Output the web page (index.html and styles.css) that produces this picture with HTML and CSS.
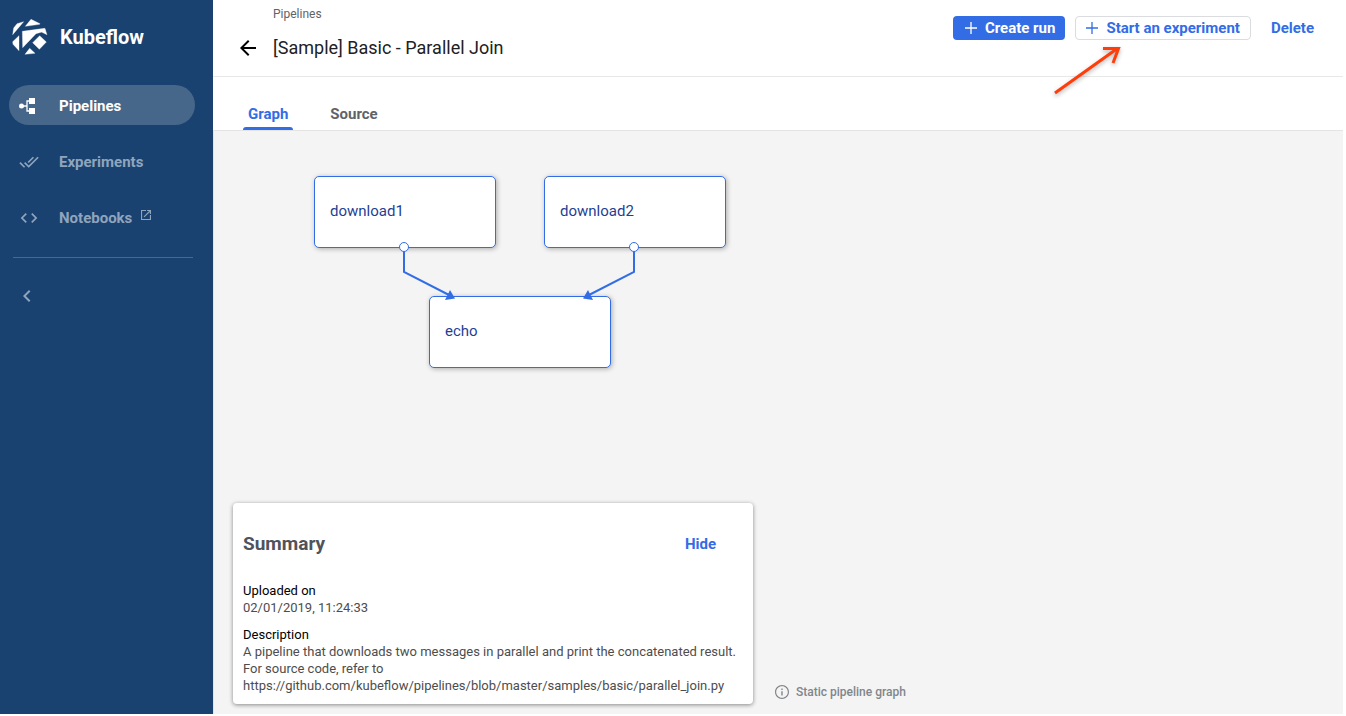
FILE: index.html
```html
<!DOCTYPE html>
<html lang="en">
<head>
<meta charset="utf-8">
<title>Kubeflow Pipelines</title>
<link rel="stylesheet" href="styles.css">
</head>
<body>
<div class="app">
  <aside class="sidebar">
    <a class="brand" href="#">
      <svg class="brand-logo" width="36" height="36" viewBox="35 57 108 108" fill="#fff" stroke="#fff" stroke-width="1" stroke-linejoin="round" aria-hidden="true">
        <path d="M37 104 40 84 50 71 70 65zM75 79 92 58 119 71 118 73zM66 94 133 85 135 92 125 96 107 101 67 143zM134 86 140 104 125 97zM118 107 138 126 117 148 97 128zM37 125 56 107 56 152 38 133zM88 145 104 160 74 163z"/>
      </svg>
      <span>Kubeflow</span>
    </a>
    <nav class="nav">
      <a class="nav-item active" href="#">
        <svg width="20" height="20" viewBox="0 0 20 20" fill="#fff" aria-hidden="true"><circle cx="2.500" cy="10" r="2.500"/><path d="M10 2h6v6h-6zM10 12h6v6h-6z"/><path d="M3 10h5M10 5H8v10h2" fill="none" stroke="#fff" stroke-width="1.300"/></svg>
        <span>Pipelines</span>
      </a>
      <a class="nav-item" href="#">
        <svg width="20" height="20" viewBox="0 0 24 24" fill="currentColor" aria-hidden="true"><path d="M18 7l-1.41-1.41-6.34 6.34 1.41 1.41L18 7zm4.24-1.41L11.66 16.17 7.48 12l-1.41 1.41L11.66 19l12-12-1.42-1.41zM.41 13.41L6 19l1.41-1.41L1.83 12 .41 13.41z"/></svg>
        <span>Experiments</span>
      </a>
      <a class="nav-item" href="#">
        <svg width="20" height="20" viewBox="0 0 24 24" fill="currentColor" aria-hidden="true"><path d="M9.400 16.600L4.800 12l4.600-4.600L8 6l-6 6 6 6 1.400-1.400zm5.200 0l4.600-4.600-4.600-4.600L16 6l6 6-6 6-1.400-1.400z"/></svg>
        <span>Notebooks</span>
        <svg class="external" width="10" height="10" viewBox="3 3 18 18" fill="currentColor" aria-hidden="true"><path d="M19 19H5V5h7V3H3v18h18v-9h-2v7zM14 3v2h3.590l-9.830 9.830 1.410 1.410L19 6.410V10h2V3h-7z"/></svg>
      </a>
    </nav>
    <button class="collapse" type="button" aria-label="Collapse sidebar">
      <svg width="24" height="24" viewBox="0 0 24 24" fill="currentColor" aria-hidden="true"><path d="M15.410 7.410L14 6l-6 6 6 6 1.410-1.410L10.830 12z"/></svg>
    </button>
  </aside>

  <main class="main">
    <header class="header">
      <div class="titles">
        <a class="crumb" href="#">Pipelines</a>
        <div class="title-row">
          <button class="back" type="button" aria-label="Back">
            <svg width="24" height="24" viewBox="0 0 24 24" fill="currentColor" aria-hidden="true"><path d="M20 11H7.830l5.590-5.590L12 4l-8 8 8 8 1.410-1.410L7.830 13H20v-2z"/></svg>
          </button>
          <h1 class="title">[Sample] Basic - Parallel Join</h1>
        </div>
      </div>
      <div class="actions">
        <button class="btn primary" type="button"><svg width="12" height="12" viewBox="0 0 12 12" stroke="currentColor" stroke-width="1.300" aria-hidden="true"><path d="M6 0v12M0 6h12"/></svg>Create run</button>
        <button class="btn outlined" type="button"><svg width="12" height="12" viewBox="0 0 12 12" stroke="currentColor" stroke-width="1.300" aria-hidden="true"><path d="M6 0v12M0 6h12"/></svg>Start an experiment</button>
        <button class="btn" type="button">Delete</button>
        <svg class="pointer" width="76" height="60" viewBox="0 0 76 60" fill="none" stroke="#ff3d0a" stroke-width="3" aria-hidden="true"><path d="M5 53 68 8M53 8.500H68.500L63 23"/></svg>
      </div>
    </header>
    <div class="tabs" role="tablist">
      <button class="tab selected" type="button" role="tab" aria-selected="true">Graph</button>
      <button class="tab" type="button" role="tab" aria-selected="false">Source</button>
    </div>
    <section class="canvas">
      <div class="graph">
        <div class="node node-download1">download1</div>
        <div class="node node-download2">download2</div>
        <div class="node node-echo">echo</div>
        <svg class="edges" width="420" height="200" viewBox="0 0 420 200" aria-hidden="true">
          <g fill="none" stroke="#326de6" stroke-width="2"><path d="M91 75V96L138 120M321 75V96L274 120"/></g>
          <path d="M137 114 142 122.500 132 124zM275 114 270 122.500 280 124z" fill="#326de6"/>
          <g fill="#fff" stroke="#326de6"><circle cx="91" cy="71" r="4.500"/><circle cx="321" cy="71" r="4.500"/></g>
        </svg>
      </div>
      <div class="bottom">
        <article class="summary">
          <div class="summary-head">
            <h2>Summary</h2>
            <button class="btn hide" type="button">Hide</button>
          </div>
          <h3>Uploaded on</h3>
          <p>02/01/2019, 11:24:33</p>
          <h3>Description</h3>
          <p>A pipeline that downloads two messages in parallel and print the concatenated result.<br>For source code, refer to<br>https://github.com/kubeflow/pipelines/blob/master/samples/basic/parallel_join.py</p>
        </article>
        <div class="note">
          <svg width="14" height="14" viewBox="2 2 20 20" fill="currentColor" aria-hidden="true"><path d="M11 17h2v-6h-2v6zm1-15C6.480 2 2 6.480 2 12s4.480 10 10 10 10-4.480 10-10S17.520 2 12 2zm0 18.300c-4.600 0-8.300-3.700-8.300-8.300S7.400 3.700 12 3.700s8.300 3.700 8.300 8.300-3.700 8.300-8.300 8.300zM11 9h2V7h-2v2z"/></svg>
          <span>Static pipeline graph</span>
        </div>
      </div>
    </section>
  </main>
</div>
</body>
</html>
```
FILE: styles.css
```css
* { box-sizing: border-box; }
body {
  margin: 0;
  background: #fff;
  font-family: Roboto, "Liberation Sans", sans-serif;
  font-size: 13px;
  color: #000;
}
button {
  font: inherit;
  border: 0;
  background: none;
  padding: 0;
  color: inherit;
}
a { color: inherit; text-decoration: none; }
svg { display: block; flex: none; }
h1, h2, h3, p { margin: 0; }

.app {
  display: flex;
  min-height: 100vh;
  padding: 0 3px 2px 0;
}

.sidebar {
  flex: none;
  width: 213px;
  background: #1a4270;
  color: #8fa5bd;
}
.brand {
  display: flex;
  align-items: center;
  gap: 12px;
  padding: 19px 12px 30px;
  color: #fff;
  font-size: 20px;
  font-weight: 700;
}
.nav {
  display: flex;
  flex-direction: column;
  gap: 16px;
  margin: 0 20px 0 13px;
  padding-bottom: 20px;
  border-bottom: 1px solid #47698c;
}
.nav-item {
  display: flex;
  align-items: center;
  gap: 20px;
  height: 40px;
  margin: 0 -2px 0 -4px;
  padding: 2px 10px 0;
  border-radius: 20px;
  font-size: 15px;
  font-weight: 700;
}
.nav-item.active { background: #466789; color: #fff; }
.external { margin: 0 0 6px -11px; }
.collapse { margin: 26px 15px; }

.main {
  flex: 1;
  min-width: 0;
  display: flex;
  flex-direction: column;
}
.header {
  display: flex;
  justify-content: space-between;
  align-items: flex-start;
  height: 77px;
  border-bottom: 1px solid #e8e8e8;
}
.titles { padding: 6px 0 0 23px; }
.crumb {
  display: block;
  margin-left: 37px;
  line-height: 16px;
  font-size: 12px;
  color: #5f6368;
}
.title-row {
  display: flex;
  align-items: center;
  gap: 13px;
  margin-top: 14px;
}
.title {
  font-size: 18px;
  line-height: 24px;
  font-weight: 400;
  color: #202124;
}
.actions {
  position: relative;
  display: flex;
  gap: 10px;
  padding: 16px 19px 0 0;
}
.btn {
  display: flex;
  align-items: center;
  gap: 8px;
  height: 24px;
  padding: 0 10px;
  border-radius: 4px;
  color: #326de6;
  font-size: 15px;
  font-weight: 700;
  white-space: nowrap;
}
.primary { padding: 0 10px 0 12px; background: #326de6; color: #fff; }
.outlined { border: 1px solid #dadce0; }
.pointer {
  position: absolute;
  top: 40px;
  right: 217px;
  filter: drop-shadow(0 2px 2px rgba(0, 0, 0, 0.3));
}

.tabs {
  display: flex;
  gap: 32px;
  height: 54px;
  padding-left: 30px;
  border-bottom: 1px solid #e4e4e4;
}
.tab {
  position: relative;
  padding: 20px 5px 0;
  color: #5f6368;
  font-size: 15px;
  font-weight: 700;
}
.tab.selected { color: #326de6; }
.tab.selected::after {
  content: "";
  position: absolute;
  left: 0;
  right: 0;
  bottom: 0;
  height: 3px;
  border-radius: 3px 3px 0 0;
  background: #326de6;
}

.canvas {
  flex: 1;
  display: flex;
  flex-direction: column;
  justify-content: space-between;
  padding: 45px 20px 10px;
  border-left: 1px solid #e4e4e4;
  background: #f4f4f4;
}
.graph {
  position: relative;
  height: 200px;
  margin-left: 80px;
}
.node {
  position: absolute;
  display: flex;
  align-items: center;
  width: 182px;
  height: 72px;
  padding: 0 15px 2px;
  border: 1px solid #326de6;
  border-radius: 5px;
  background: #fff;
  box-shadow: 1px 1px 5px rgba(0, 0, 0, 0.3);
  color: #1f3f94;
  font-size: 15px;
}
.node-download1 { left: 0; top: 0; }
.node-download2 { left: 230px; top: 0; }
.node-echo { left: 115px; top: 120px; }
.edges { position: absolute; left: -1px; top: 0; }

.bottom {
  display: flex;
  align-items: flex-end;
  gap: 22px;
}
.summary {
  width: 520px;
  margin-left: -1px;
  padding: 30px 10px 10px;
  border-radius: 4px;
  background: #fff;
  box-shadow: 0 1px 4px rgba(0, 0, 0, 0.45);
  line-height: 17px;
  color: #4d4d4d;
}
.summary-head {
  display: flex;
  align-items: center;
  justify-content: space-between;
  margin-bottom: 27px;
  padding-right: 17px;
}
.summary h2 {
  font-size: 19px;
  line-height: 22px;
  color: #50535a;
}
.summary h3 {
  font-size: 13px;
  font-weight: 400;
  color: #000;
}
.summary h3:not(:last-of-type) + p { margin-bottom: 10px; }
.hide { height: 22px; }
.note {
  display: flex;
  align-items: center;
  gap: 7px;
  padding-bottom: 5px;
  color: #80868b;
  font-size: 12px;
  font-weight: 500;
}
```
